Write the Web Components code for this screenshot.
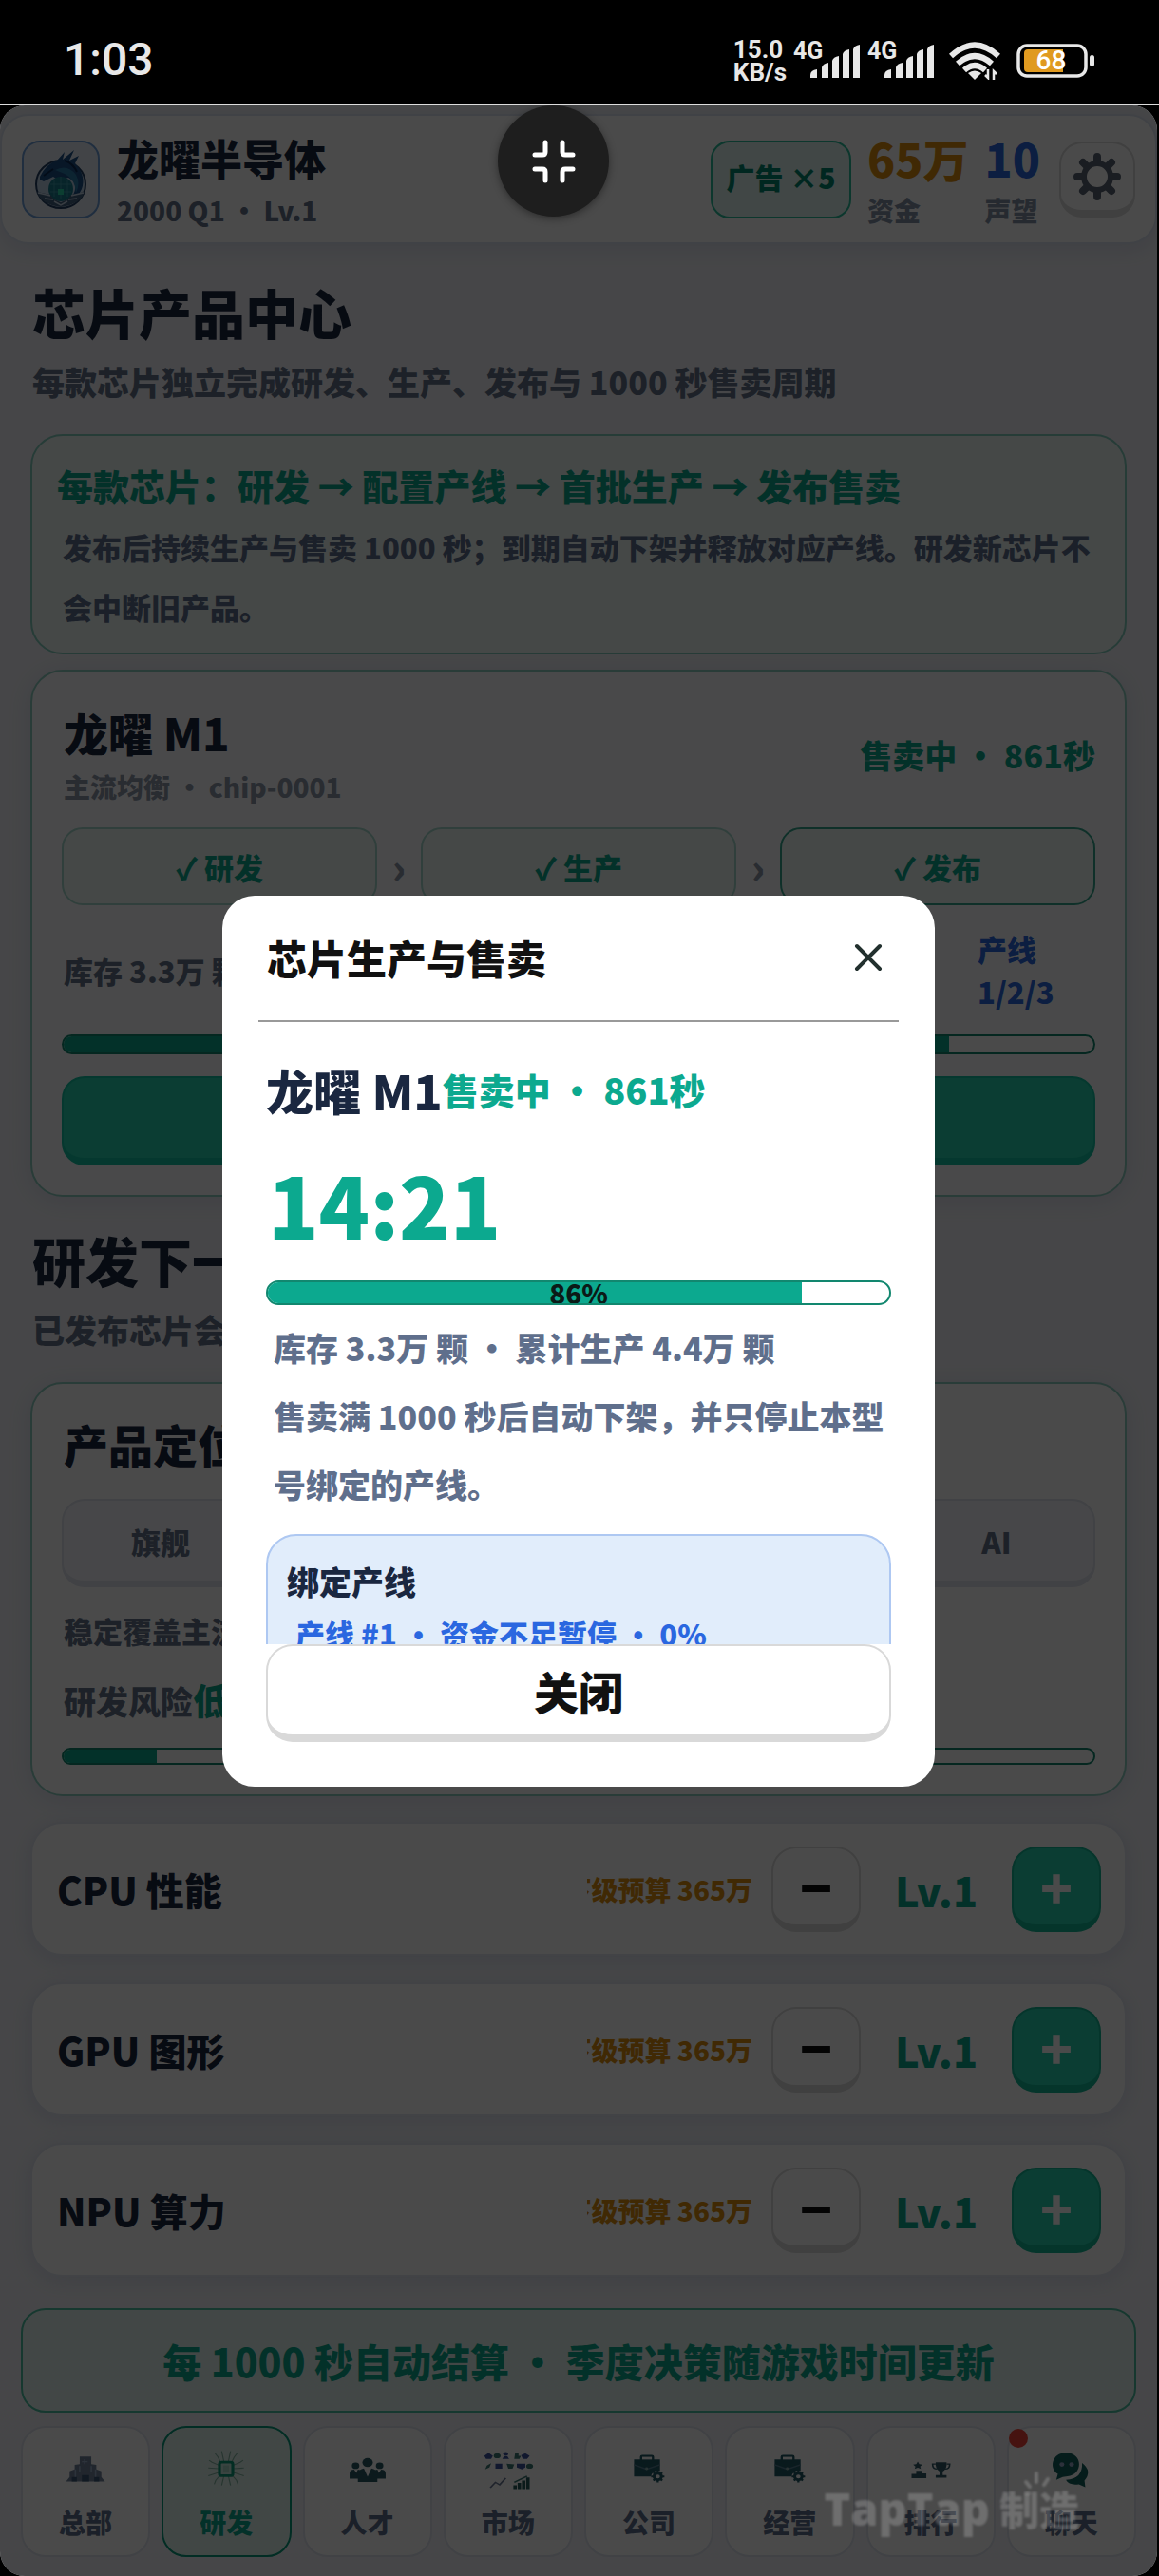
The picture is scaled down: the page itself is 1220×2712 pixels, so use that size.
<!DOCTYPE html>
<html lang="zh-CN">
<head>
<meta charset="utf-8">
<meta name="viewport" content="width=device-width, initial-scale=1">
<title>芯片产品中心</title>
<style>
  html, body { margin: 0; background: #000; }
  body {
    min-height: 100vh; display: flex; flex-direction: column;
    font-family: "Noto Sans CJK SC", "Noto Sans", sans-serif; font-weight: 900; color: #1a2740;
    --green: #0ca98f; --green-deep: #00876e; --gold: #dc8f10; --blue: #2a67e0; --muted: #5f6f8c; --ink: #1a2740;
  }
</style>
</head>
<body>
<status-bar></status-bar>
<game-app>
  <app-header slot="header"></app-header>

  <page-heading class="first">芯片产品中心<span slot="sub">每款芯片独立完成研发、生产、发布与 1000 秒售卖周期</span></page-heading>
  <info-card>每款芯片：研发 → 配置产线 → 首批生产 → 发布售卖<span slot="body">发布后持续生产与售卖 1000 秒；到期自动下架并释放对应产线。研发新芯片不会中断旧产品。</span></info-card>
  <chip-card></chip-card>
  <page-heading>研发下一<span slot="sub">已发布芯片会</span></page-heading>
  <plan-card></plan-card>
  <spec-list slot="specs">
    <spec-row>CPU 性能</spec-row>
    <spec-row>GPU 图形</spec-row>
    <spec-row>NPU 算力</spec-row>
  </spec-list>

  <notice-banner slot="footer">每 1000 秒自动结算 • 季度决策随游戏时间更新</notice-banner>
  <nav-bar slot="footer">
    <nav-item icon="base">总部</nav-item>
    <nav-item icon="chip" active>研发</nav-item>
    <nav-item icon="team">人才</nav-item>
    <nav-item icon="market">市场</nav-item>
    <nav-item icon="case">公司</nav-item>
    <nav-item icon="case">经营</nav-item>
    <nav-item icon="rank">排行</nav-item>
    <nav-item icon="chat" alert>聊天</nav-item>
  </nav-bar>

  <chip-dialog slot="overlay"></chip-dialog>
  <float-toggle slot="overlay"></float-toggle>
  <water-mark slot="overlay"></water-mark>
</game-app>

<script>
const define = (name, markup) => customElements.define(name, class extends HTMLElement {
  constructor() {
    super();
    const t = document.createElement('template');
    t.innerHTML = '<style>*{box-sizing:border-box}h2,h3,b{font-weight:inherit}button{font:inherit;margin:0;padding:0}</style>' +
      (typeof markup === 'function' ? markup(this) : markup);
    this.attachShadow({ mode: 'open' }).append(t.content.cloneNode(true));
  }
});

define('signal-bars', `
<style>
  :host { display: grid; font: 700 25px/20px Roboto, sans-serif; width: 71px; }
  span, svg { grid-area: 1 / 1; }
  span { align-self: start; }
  svg { justify-self: end; align-self: end; }
</style>
<span>4G</span>
<svg width="53" height="40" viewBox="0 0 53 40" fill="#e8e8e8">
  <path d="M0 38v-3q0-5 7-6v9zM12 38V27q1-4 7-5v16zM23 38V20q1-4 7-5v23zM34 38V13q1-4 7-5v30zM45 38V8q1-4 7-5v35z"/>
</svg>`);

define('status-bar', `
<style>
  :host { display: flex; align-items: center; height: 110px; padding: 0 67px; box-sizing: content-box;
    border-bottom: 1px solid #ddd; color: #e8e8e8; font-family: Roboto, sans-serif; font-weight: 500; }
  .time { font-size: 48px; line-height: 56px; flex: 1; padding-top: 16px; }
  .right { display: flex; align-items: center; gap: 7px; padding-top: 18px; }
  .rate { font-size: 26px; line-height: 24px; font-weight: 700; }
  .wifi { margin: 0 10px 0 8px; }
  .battery { display: grid; place-items: center; font-size: 28px; line-height: 36px; color: #fff; font-weight: 500; width: 83px; }
  .battery > * { grid-area: 1 / 1; }
  .battery span { padding-right: 10px; }
</style>
<div class="time">1:03</div>
<div class="right">
  <div class="rate">15.0<br>KB/s</div>
  <signal-bars></signal-bars><signal-bars></signal-bars>
  <svg class="wifi" width="54" height="40" viewBox="0 0 54 40" fill="none" stroke="#e8e8e8" stroke-width="6">
    <path d="M2 15Q27-8 52 15M9 23q18-16 36 0M16 30q11-10 22 0"/>
    <path d="M20 33q7-5 14 0l-7 7z" fill="#e8e8e8" stroke="none"/>
    <path d="M41 29v9l-3-3M47 40v-9l3 3" stroke-width="2.5"/>
  </svg>
  <div class="battery">
    <svg width="83" height="36" viewBox="0 0 83 36">
      <rect x="2" y="2" width="71" height="32" rx="9" fill="none" stroke="#e8e8e8" stroke-width="3.5"/>
      <path d="M12 6h37v24H12q-4 0-4-4V10q0-4 4-4z" fill="#e09a20"/>
      <rect x="77" y="12" width="5" height="12" rx="2.5" fill="#e8e8e8"/>
    </svg>
    <span>68</span>
  </div>
</div>`);

define('game-app', `
<style>
  :host { display: flex; flex-direction: column; flex: 1; position: relative; margin-right: 2px;
    background: #f0f1f6; border-radius: 26px; overflow: hidden; }
  header { padding-top: 9px; }
  main { flex: 1; padding: 0 32px; }
  footer { padding: 0 22px 20px; display: grid; gap: 14px; }
  .overlay { position: absolute; inset: 0; background: rgba(0,0,0,.71); display: grid; place-items: center; }
</style>
<header><slot name="header"></slot></header>
<main><slot></slot><slot name="specs"></slot></main>
<footer><slot name="footer"></slot></footer>
<div class="overlay"><slot name="overlay"></slot></div>`);

define('app-header', `
<style>
  :host { display: flex; align-items: center; height: 137px; padding: 0 21px; background: #fff; box-sizing: border-box;
    border: 2px solid #dde4ef; border-radius: 30px; box-shadow: 0 6px 20px rgba(90,110,170,.14); }
  .logo { flex: none; border: 2px solid #6fa0da; border-radius: 19px; background: #e3ebf5; display: block; }
  .name { flex: 1; padding: 4px 0 0 18px; font-size: 44px; line-height: 54px; }
  .name small, .stat small { display: block; font-size: 28px; line-height: 44px; padding-top: 6px; }
  .name small { color: #64748b; }
  .ad { width: 148px; height: 82px; padding-bottom: 6px; border: 2px solid #2cbf9c; border-radius: 20px; background: #def5ef; color: var(--green-deep); font-size: 30px; }
  .stat { padding: 4px 0 0 17px; font-size: 48px; line-height: 54px; }
  .stat small { color: #8491a6; }
  .gold { color: var(--gold); } .blue { color: var(--blue); }
  .gear { width: 80px; height: 80px; margin-left: 20px; border: 2px solid #dcdcdc; border-bottom-width: 8px; border-radius: 24px; background: #fff; display: grid; place-items: center; }
</style>
<svg class="logo" width="82" height="82" viewBox="0 0 78 78" role="img" aria-label="龙曜半导体">
  <ellipse cx="39" cy="44" rx="26" ry="25" fill="#b9cde4" stroke="#244063" stroke-width="2"/>
  <path d="M17 36Q24 22 35 19L43 10 41 18 53 8 48 19 58 14 54 22Q66 35 61 49 56 60 51 57 59 43 47 37 36 41 31 36L21 41 17 39z" fill="#1c4f88"/>
  <path d="M33 29Q46 22 55 34 60 43 55 53 54 38 43 33z" fill="#2c7ca8"/>
  <path d="M21 35l10-7M43 19q9 3 13 12" stroke="#0c2a52" stroke-width="2" fill="none"/>
  <circle cx="39" cy="49" r="13" fill="#187b8e"/>
  <path d="M32 39v18M39 36v24M46 39v18M28 44h22M28 52h22" stroke="#3f9ca8" stroke-width="1"/>
  <rect x="36" y="49" width="6" height="6" fill="#29d6a8"/>
  <path d="M14 52l14 3 4 5 7 3 7-3 4-5 14-3q-4 13-25 16Q18 65 14 52z" fill="#44607f"/>
  <path d="M15 53l13 3M63 53l-13 3M22 59l9 1M56 59l-9 1M32 62l7 4 7-4" stroke="#c2d2e4" stroke-width="1.5" fill="none"/>
</svg>
<div class="name">龙曜半导体<small>2000 Q1 • Lv.1</small></div>
<button class="ad">广告 ×5</button>
<div class="stat gold">65万<small>资金</small></div>
<div class="stat blue">10<small>声望</small></div>
<button class="gear" aria-label="设置">
  <svg width="52" height="52" viewBox="0 0 52 52">
    <g stroke="#5b6675" stroke-width="8" stroke-linecap="round"><path d="M26 5v42M5 26h42M11 11l30 30M41 11L11 41"/></g>
    <circle cx="26" cy="26" r="14" fill="#fff" stroke="#5b6675" stroke-width="6"/>
  </svg>
</button>`);

define('page-heading', `
<style>
  :host { display: block; padding: 31px 3px 31px 2px; }
  :host(.first) { padding-top: 36px; }
  h2 { margin: 0 0 15px; font-size: 56px; line-height: 70px; }
  p { margin: 0; font-size: 34px; line-height: 48px; color: #64748b; }
</style>
<h2><slot></slot></h2><p><slot name="sub"></slot></p>`);

define('info-card', `
<style>
  :host { display: block; padding: 27px 28px 17px 26px; border: 2px solid #84cdbf; border-radius: 34px; background: #eef6f4; margin-bottom: 16px; }
  h3 { margin: 0 0 8px; font-size: 38px; line-height: 50px; color: var(--green); }
  p { margin: 0; padding: 0 6px; font-size: 31px; line-height: 63px; color: var(--muted); }
</style>
<h3><slot></slot></h3><p><slot name="body"></slot></p>`);

define('progress-bar', el => `
<style>
  :host { display: grid; border: 2px solid #12876f; border-radius: 14px; overflow: hidden; background: #fff; height: 21px; box-sizing: border-box; }
  :host(.thin) { height: 18px; }
  .fill { grid-area: 1 / 1; background: var(--green); width: ${el.getAttribute('value')}%; }
  .label { grid-area: 1 / 1; justify-self: center; align-self: center; font-size: 28px; line-height: 22px; color: #0b1a17; }
</style>
<div class="fill"></div><div class="label"><slot></slot></div>`);

const cardBox = `:host { display: flex; flex-direction: column; gap: 23px; border: 2px solid #8fcfc2; border-radius: 34px; background: #fbfbfd; box-shadow: 0 4px 24px rgba(90,110,170,.14); }`;

define('chip-card', `
<style>
  ${cardBox}
  :host { padding: 34px 31px 31px; }
  .head, .stock { display: flex; align-items: center; justify-content: space-between; padding-left: 2px; }
  h3 { margin: 0; font-size: 47px; line-height: 60px; }
  .head small { display: block; font-size: 28px; line-height: 40px; padding-top: 7px; color: #8c97a9; }
  .state { font-size: 34px; color: var(--green); }
  .steps { display: flex; align-items: center; font-size: 31px; }
  .step { flex: 1; height: 82px; display: grid; place-items: center; border: 2px solid #a5d9cd; border-radius: 22px; background: #eef6f4; color: var(--green); }
  .step.now { border-color: #35a78f; }
  .sep { width: 46px; text-align: center; font-size: 44px; color: #8c97a9; }
  .stock { font-size: 31px; line-height: 45px; color: #64748b; }
  .line { width: 124px; color: var(--blue); }
  .main { height: 94px; border: 2px solid #14c2a1; border-bottom-width: 8px; border-radius: 24px; background: #26d2af; }
</style>
<div class="head"><div><h3>龙曜 M1</h3><small>主流均衡 • chip-0001</small></div><div class="state">售卖中 • 861秒</div></div>
<div class="steps"><div class="step">✓ 研发</div><div class="sep">›</div><div class="step">✓ 生产</div><div class="sep">›</div><div class="step now">✓ 发布</div></div>
<div class="stock"><span>库存 3.3万 颗</span><span class="line">产线 1/2/3</span></div>
<progress-bar value="86"></progress-bar>
<button class="main" aria-label="查看生产与售卖"></button>`);

define('plan-card', `
<style>
  ${cardBox}
  :host { padding: 28px 31px 31px; background: #fff; }
  h3 { margin: 0; font-size: 47px; line-height: 70px; }
  h3, p { padding-left: 2px; }
  .options { display: flex; gap: 12px; }
  .options button { flex: 1; height: 93px; border: 2px solid #dfe2ec; border-bottom-width: 7px; border-radius: 24px; background: #f3f5fa; color: #64748b; font-size: 31px; }
  p { margin: 0; font-size: 31px; line-height: 46px; color: #64748b; }
  .risk { font-size: 34px; line-height: 52px; }
  b { font-size: 38px; color: var(--green); }
</style>
<h3>产品定位</h3>
<div class="options"><button>旗舰</button><button aria-label="定位二"></button><button aria-label="定位三"></button><button aria-label="定位四"></button><button>AI</button></div>
<p>稳定覆盖主流</p>
<p class="risk">研发风险<b>低</b></p>
<progress-bar value="9" class="thin"></progress-bar>`);

define('spec-list', `
<style>:host { display: grid; gap: 28px; padding: 27px 0; }</style><slot></slot>`);

define('spec-row', `
<style>
  :host { display: flex; align-items: center; height: 141px; box-sizing: border-box; padding: 0 25px 0 26px; border: 2px solid #e2e7f1; border-radius: 34px; background: #fff; box-shadow: 0 4px 20px rgba(90,110,170,.15); }
  h3 { flex: 1; margin: 0; font-size: 40px; line-height: 60px; }
  .cost { display: flex; justify-content: flex-end; width: 174px; overflow: hidden; white-space: nowrap; font-size: 28px; line-height: 40px; color: var(--gold); margin-right: 20px; }
  .lv { width: 159px; text-align: center; font-size: 43px; color: var(--green); }
  button { width: 94px; height: 90px; border: 2px solid #dcdcdc; border-bottom-width: 8px; border-radius: 26px; background: #fff; font-size: 56px; line-height: 74px; color: #111; }
  .add { background: #26d2af; border-color: #14b595; color: #fff; }
</style>
<h3><slot></slot></h3>
<span class="cost">下级预算 365万</span>
<button aria-label="降低">−</button><span class="lv">Lv.1</span><button class="add" aria-label="提高">+</button>`);

define('notice-banner', `
<style>
  :host { display: grid; place-items: center; height: 110px; box-sizing: border-box; border: 2px solid #4cc0a3; border-radius: 26px; background: #e3f5f0; color: var(--green); font-size: 41px; line-height: 60px; }
</style><slot></slot>`);

define('nav-bar', `<style>:host { display: flex; gap: 12px; }</style><slot></slot>`);

const icons = {
  base: ['32 31) scale(.76 .67) translate(-32 -24', '<path d="M5 44l5-7v-9l7-3v-7l7-1V5h16v12l7 1v7l7 3v9l5 7z" fill="#73849d"/><path d="M31 9v8M27 13h8M18 25v14M46 25v14M24 20v10M40 20v10" stroke="#9db1cb" stroke-width="2"/><path d="M27 34h10v10H27zM13 37h7v7h-7zM44 37h7v7h-7z" fill="#3b5876"/>'],
  chip: ['32 31) scale(.78 .68) translate(-32 -29', '<g stroke="#85b5a3" stroke-width="1.5" fill="none"><path d="M25 20l-4-9-4-6M29 18l-3-16M35 18l3-16M39 20l4-9 4-6M23 24l-10-5-4-3M22 29L8 28M22 35L8 40M24 39l-6 8-2 6M29 40l-3 15M35 40l3 15M40 39l6 8 2 6M41 24l10-5 4-3M42 29l14-1M42 35l14 5"/></g><rect x="23" y="19" width="18" height="21" rx="3" fill="#c8ebdf" stroke="#0c9c78" stroke-width="4"/><rect x="28" y="24" width="8" height="11" fill="#a8d8c8"/>'],
  team: ['32 32) scale(.79 .68) translate(-32 -26', '<g fill="#2a5b66"><circle cx="32" cy="15" r="7"/><circle cx="16" cy="20" r="5"/><circle cx="48" cy="20" r="5"/><path d="M8 40v-8q0-6 6-6l3 5 2-5q4 0 4 5l-2 9zM56 40v-8q0-6-6-6l-3 5-2-5q-4 0-4 5l2 9z"/><path d="M19 45V33q1-8 8-9l5 13 5-13q7 1 8 9v12z"/></g>'],
  market: ['32 33) scale(.9 .65) translate(-35 -31', '<g fill="#3d559f"><path d="M7 7l5-5 5 5-2 5H9zM28 12l2-4h4l2 4zM55 3l5 4-3 5h-5l-2-6zM20 20h8v8h-8zM45 20h10v6l-4 3-6-3z"/><circle cx="32" cy="4" r="3"/></g><g fill="#3c7a75"><circle cx="22" cy="7" r="4"/><path d="M43 3h4v4h3l-2 5h-6zM8 29l2-6 5-4-2 7zM33 20l9 1-2 7h-5z"/><circle cx="60" cy="24" r="4"/></g><path d="M14 59l6-9 5 4 7-11" stroke="#6a7896" stroke-width="2" fill="none"/><path d="M42 50l15-10" stroke="#3c7a75" stroke-width="2"/><path d="M43 55v6M48 51v10M53 47v14M58 42v19" stroke="#26595c" stroke-width="4"/>'],
  case: ['32 31) scale(.78 .69) translate(-34 -26', '<path d="M14 12h8V8q0-3 3-3h13q3 0 3 3v4h8v26H14z" fill="#215966"/><path d="M25 12V8h13v4z" fill="#fff"/><path d="M14 20l17 7 18-7" stroke="#568092" stroke-width="2" fill="none"/><circle cx="31" cy="26" r="2" fill="#8aa"/><circle cx="46" cy="38" r="9" fill="#fff"/><circle cx="46" cy="38" r="5" fill="#fff" stroke="#215966" stroke-width="4"/><path d="M46 29v4M46 43v4M37 38h4M51 38h4M40 32l3 3M52 32l-3 3M40 44l3-3M52 44l-3-3" stroke="#215966" stroke-width="3"/>'],
  rank: ['32 32) scale(.82 .65) translate(-33 -27', '<g fill="#325b69"><path d="M8 41v-7h6v-5h7v4h6v8zM16 14l2 4 4 1-3 3 1 4-4-2-4 2 1-4-3-3 4-1zM39 15h14v5q-1 8-5 10v6h5v4H39v-4h5v-6q-4-3-5-10z"/></g><path d="M39 18h-4q0 8 6 8M53 18h4q0 8-6 8" fill="none" stroke="#325b69" stroke-width="2"/>'],
  chat: ['32 32) scale(.85 .77) translate(-29 -26', '<g fill="#14605e"><path d="M26 3c22 0 21 31 2 32l-6 1-8 4 2-8C5 25 8 3 26 3z" transform="translate(-4)"/><path d="M42 17q13 11 3 24l1 9-8-4q-12 2-16-6 21-1 20-23z"/></g><circle cx="17" cy="19" r="3" fill="#9ac"/><circle cx="29" cy="19" r="3" fill="#9ac"/>']
};
define('nav-item', el => `
<style>
  :host { display: block; flex: 1; position: relative; }
  button { width: 100%; height: 138px; border: 2px solid #dfe3ee; border-radius: 26px; background: #fff; color: var(--muted); font-size: 28px; line-height: 40px;
    display: flex; flex-direction: column; align-items: center; justify-content: flex-end; gap: 7px; padding-bottom: 15px; }
  :host([active]) button { background: #dff4ee; border-color: #079b7c; color: var(--green); }
  .dot { position: absolute; left: 2px; top: 3px; width: 20px; height: 20px; border-radius: 50%; background: #f04438; }
</style>
<button><svg width="64" height="60" viewBox="0 0 64 60"><g transform="translate(${icons[el.getAttribute('icon')][0]})">${icons[el.getAttribute('icon')][1]}</g></svg><slot></slot></button>
${el.hasAttribute('alert') ? '<span class="dot"></span>' : ''}`);

define('float-toggle', `
<style>
  :host { position: absolute; top: 0; left: 524px; }
  button { width: 117px; height: 117px; border: 0; border-radius: 50%; background: #1e1e1e; box-shadow: 0 2px 8px rgba(0,0,0,.4); display: grid; place-items: center; }
</style>
<button aria-label="退出全屏"><svg width="46" height="46" viewBox="0 0 46 46" fill="none" stroke="#fff" stroke-width="5" stroke-linecap="round">
  <path d="M3 16h8q3 0 3-3V3M43 16h-8q-3 0-3-3V3M3 31h8q3 0 3 3v9M43 31h-8q-3 0-3 3v9"/></svg></button>`);

define('water-mark', `
<style>
  :host { position: absolute; right: 82px; bottom: 41px; display: flex; align-items: center; gap: 10px; color: rgba(255,255,255,.2); font-size: 42px; line-height: 60px; filter: blur(1px); }
  span { font: 800 47px/60px "Open Sans", sans-serif; }
  svg { position: absolute; right: 26px; top: -10px; }
</style>
<span>TapTap</span>制造
<svg width="36" height="28" viewBox="0 0 36 28" stroke="rgba(255,255,255,.2)" stroke-width="4" stroke-linecap="round"><path d="M6 12l4 5M17 3v9M29 9l-4 6M6 24h3"/></svg>`);

define('chip-dialog', `
<style>
  :host { display: block; width: 750px; max-width: 90%; }
  section { background: #fff; border-radius: 34px; padding: 0 46px 47px; }
  header { display: flex; align-items: center; justify-content: space-between; height: 133px; margin: 0 -8px; padding: 0 9px; border-bottom: 2px solid #999; }
  h2 { margin: 0; font-size: 42px; line-height: 60px; color: #111; }
  .x { width: 46px; height: 46px; border: 0; background: none; display: grid; place-items: center; }
  .body { height: 655px; overflow: hidden; padding-top: 38px; }
  .row { display: flex; align-items: center; font-size: 50px; line-height: 66px; }
  .row span { font-size: 38px; color: var(--green); }
  .time { font-size: 88px; line-height: 112px; padding: 31px 0 25px; color: var(--green); margin-left: 2px; }
  progress-bar { height: 26px; }
  p { margin: 0; padding: 9px 6px 16px 8px; font-size: 34px; line-height: 72px; color: var(--muted); }
  .bind { border: 2px solid #aec8f2; border-radius: 32px; background: #e1edfb; padding: 25px 20px; font-size: 34px; line-height: 46px; }
  .bind div { font-size: 31px; padding: 9px 9px; color: var(--blue); }
  .close { width: 100%; height: 103px; border: 2px solid #d9d9d9; border-bottom-width: 8px; border-radius: 28px; background: #fff; font-size: 47px; color: #111; display: block; }
</style>
<section role="dialog" aria-label="芯片生产与售卖">
  <header><h2>芯片生产与售卖</h2><button class="x" aria-label="关闭窗口"><svg width="30" height="30" viewBox="0 0 30 30" stroke="#22302e" stroke-width="4" stroke-linecap="round"><path d="M3 3l24 24M27 3L3 27"/></svg></button></header>
  <div class="body">
    <div class="row">龙曜 M1<span>售卖中 • 861秒</span></div>
    <div class="time">14:21</div>
    <progress-bar value="86">86%</progress-bar>
    <p>库存 3.3万 颗 • 累计生产 4.4万 颗<br>售卖满 1000 秒后自动下架，并只停止本型号绑定的产线。</p>
    <div class="bind">绑定产线<div>产线 #1 • 资金不足暂停 • 0%</div></div>
  </div>
  <button class="close">关闭</button>
</section>`);
</script>
</body>
</html>
